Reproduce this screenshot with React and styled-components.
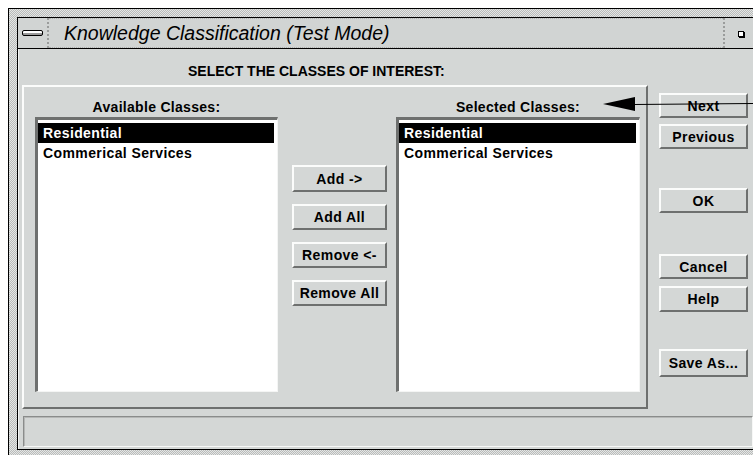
import React from "react";
import styled, { createGlobalStyle } from "styled-components";

const GlobalStyle = createGlobalStyle`
  html, body {
    margin: 0;
    padding: 0;
    background: #ffffff;
    overflow: hidden;
  }
`;

const stipple = `
  background-color: #d0d2d1;
  background-image: repeating-conic-gradient(#b9bbba 0 25%, #e4e6e5 0 50%);
  background-size: 2px 2px;
`;

const Page = styled.div`
  position: relative;
  width: 753px;
  height: 455px;
  overflow: hidden;
  box-sizing: border-box;
  padding: 8px 0 0 8px;
  font-family: "Liberation Sans", Arial, sans-serif;
  color: #000;
`;

const Frame = styled.div`
  width: 790px;
  height: 460px;
  box-sizing: border-box;
  border-left: 1px solid #000;
  border-top: 1px solid #000;
  padding: 8px 0 0 8px;
  ${stipple}
`;

const Window = styled.div`
  width: 770px;
  border: 1px solid #000;
  background: #d4d7d6;
`;

const TitleBar = styled.div`
  display: flex;
  height: 30px;
  border-bottom: 1px solid #000;
  background: #d1d4d3;
`;

const TitleButton = styled.div`
  width: ${(p) => p.$width}px;
  flex: none;
  display: flex;
  align-items: center;
  justify-content: ${(p) => (p.$side === "left" ? "center" : "flex-start")};
  box-sizing: border-box;
  border-${(p) => (p.$side === "left" ? "right" : "left")}: 2px dotted #9a9c9b;
`;

const MenuGlyph = styled.div`
  width: 19px;
  height: 4px;
  border: 1px solid #000;
  border-radius: 2px;
  background: linear-gradient(#ffffff 0 50%, #9a9a9a 50%);
`;

const MaxGlyph = styled.div`
  width: 4px;
  height: 4px;
  margin: 1px 0 0 13px;
  border: 1px solid #000;
  background: #fff;
  box-shadow: 1px 1px 0 #000;
`;

const TitleText = styled.div`
  flex: 1;
  display: flex;
  align-items: center;
  padding-left: 15px;
  font-size: 19.5px;
  font-style: italic;
  border-top: 1px dotted #aeb0af;
  border-bottom: 1px dotted #aeb0af;
`;

const Client = styled.div`
  height: 400px;
  box-sizing: border-box;
  border-left: 1px solid #f2f4f3;
  padding-left: 3px;
  display: flex;
  flex-direction: column;
`;

const Heading = styled.div`
  padding: 13px 0 0 166px;
  height: 18px;
  line-height: 18px;
  margin-bottom: 5px;
  font-size: 14px;
  font-weight: bold;
`;

const MainRow = styled.div`
  display: flex;
  align-items: flex-start;
`;

const GroupPanel = styled.div`
  width: 626px;
  height: 324px;
  box-sizing: border-box;
  border: 2px solid;
  border-color: #fbfcfb #6e706f #6e706f #fbfcfb;
  padding: 0 6px 0 11px;
  display: flex;
  align-items: flex-start;
`;

const ListColumn = styled.div`
  width: ${(p) => p.$width}px;
  display: flex;
  flex-direction: column;
`;

const ColumnLabel = styled.div`
  padding-top: 12px;
  height: 16px;
  line-height: 16px;
  margin-bottom: 2px;
  text-align: center;
  font-size: 14px;
  font-weight: bold;
  letter-spacing: 0.3px;
`;

const ListBox = styled.div`
  height: 275px;
  box-sizing: border-box;
  border-style: solid;
  border-width: 3px 1px 1px 3px;
  border-color: #6e706f #f4f5f4 #f4f5f4 #6e706f;
  background: #fff;
  padding: 3px 3px 0 0;
`;

const ListItem = styled.div`
  height: 20px;
  line-height: 20px;
  padding-left: 5px;
  font-size: 14px;
  font-weight: bold;
  letter-spacing: 0.4px;
  white-space: nowrap;
  background: ${(p) => (p.$selected ? "#000" : "transparent")};
  color: ${(p) => (p.$selected ? "#fff" : "#000")};
`;

const MiddleColumn = styled.div`
  margin: 78px 9px 0 14px;
  width: 95px;
  display: flex;
  flex-direction: column;
  gap: 12px;
`;

const Button = styled.div`
  height: ${(p) => p.$height || 27}px;
  margin-top: ${(p) => p.$top || 0}px;
  box-sizing: border-box;
  border: 2px solid;
  border-color: #fbfcfb #6e706f #6e706f #fbfcfb;
  background: #d4d7d6;
  display: flex;
  align-items: center;
  justify-content: center;
  font-size: 14px;
  font-weight: bold;
  letter-spacing: 0.4px;
  white-space: nowrap;
`;

const SideColumn = styled.div`
  width: 89px;
  margin-left: 11px;
  display: flex;
  flex-direction: column;
`;

const StatusBar = styled.div`
  margin: 7px 0 0 1px;
  width: 730px;
  height: 31px;
  box-sizing: border-box;
  border: 1px solid;
  border-color: #8a8c8b #f6f7f6 #f6f7f6 #8a8c8b;
  box-shadow: inset 1px 1px 0 #b5b7b6;
`;

const Pointer = styled.svg`
  position: absolute;
  left: 600px;
  top: 94px;
  width: 153px;
  height: 20px;
  pointer-events: none;
`;

const available = ["Residential", "Commerical Services"];
const selected = ["Residential", "Commerical Services"];

function ClassList({ label, items, width }) {
  return (
    <ListColumn $width={width}>
      <ColumnLabel>{label}</ColumnLabel>
      <ListBox>
        {items.map((item, i) => (
          <ListItem key={item} $selected={i === 0}>
            {item}
          </ListItem>
        ))}
      </ListBox>
    </ListColumn>
  );
}

const sideButtons = [
  { label: "Next", top: 8, height: 25 },
  { label: "Previous", top: 6, height: 25 },
  { label: "OK", top: 39, height: 25 },
  { label: "Cancel", top: 41, height: 25 },
  { label: "Help", top: 7, height: 26 },
  { label: "Save As...", top: 37, height: 28 },
];

export default function App() {
  return (
    <Page>
      <GlobalStyle />
      <Frame>
        <Window>
          <TitleBar>
            <TitleButton $side="left" $width={31}>
              <MenuGlyph />
            </TitleButton>
            <TitleText>Knowledge Classification (Test Mode)</TitleText>
            <TitleButton $side="right" $width={65}>
              <MaxGlyph />
            </TitleButton>
          </TitleBar>
          <Client>
            <Heading>SELECT THE CLASSES OF INTEREST:</Heading>
            <MainRow>
              <GroupPanel>
                <ClassList label="Available Classes:" items={available} width={243} />
                <MiddleColumn>
                  <Button>Add -&gt;</Button>
                  <Button $height={26}>Add All</Button>
                  <Button $height={26}>Remove &lt;-</Button>
                  <Button $height={26}>Remove All</Button>
                </MiddleColumn>
                <ClassList label="Selected Classes:" items={selected} width={244} />
              </GroupPanel>
              <SideColumn>
                {sideButtons.map((b) => (
                  <Button key={b.label} $top={b.top} $height={b.height}>
                    {b.label}
                  </Button>
                ))}
              </SideColumn>
            </MainRow>
            <StatusBar />
          </Client>
        </Window>
      </Frame>
      <Pointer viewBox="0 0 153 20">
        <polygon points="3,10 35,3 35,17" fill="#000" />
        <line x1="34" y1="10.5" x2="153" y2="9.5" stroke="#000" strokeWidth="1.2" />
      </Pointer>
    </Page>
  );
}
